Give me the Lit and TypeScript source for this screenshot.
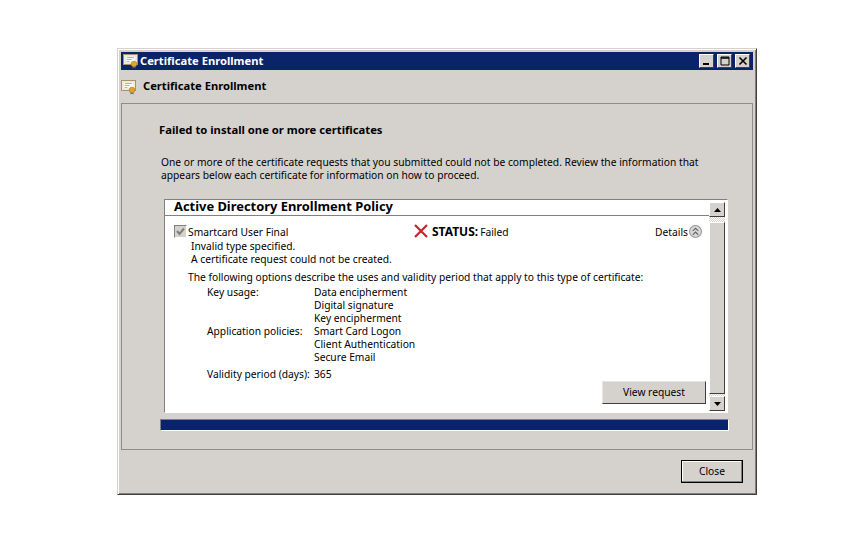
import { LitElement, html, css, svg } from 'lit';
import { customElement } from 'lit/decorators.js';

const certIcon = html`<svg width="16" height="16" viewBox="0 0 16 16">
  <rect x="0.5" y="1.5" width="14" height="10" fill="#f6f3e8" stroke="#a8926a"/>
  <rect x="2" y="3" width="11" height="7" fill="#fbfaf4" stroke="#d9cfb4" stroke-width="0.6"/>
  <path d="M4 4.5h7M3.5 6.5h5M3.5 8.5h3" stroke="#a9b6cc" stroke-width="1"/>
  <path d="M9.5 12v3.5l1.5-1 1.5 1V12" fill="#3a62c0"/>
  <circle cx="11" cy="11" r="2.8" fill="#e3a526" stroke="#b07810" stroke-width="0.6"/>
</svg>`;

const details = [
  ['Key usage:', ['Data encipherment', 'Digital signature', 'Key encipherment']],
  ['Application policies:', ['Smart Card Logon', 'Client Authentication', 'Secure Email']],
  ['Validity period (days):', ['365']],
] as const;

const chevronUp = svg`<path d="M3.5 5.5L6 3l2.5 2.5M3.5 9L6 6.5 8.5 9" fill="none" stroke="#666" stroke-width="1"/>`;

@customElement('app-root')
export class AppRoot extends LitElement {
  static styles = css`
    :host {
      display: block;
      width: 841px;
      height: 550px;
      box-sizing: border-box;
      padding: 48px 84px 55px 117px;
      background: #fff;
      font-family: 'Noto Sans', sans-serif;
      font-size: 10.26px;
      color: #000;
    }
    .window {
      width: 640px;
      height: 447px;
      box-sizing: border-box;
      background: #d5d2cd;
      border: 1px solid;
      border-color: #d5d2cd #404040 #404040 #d5d2cd;
      box-shadow: inset 1px 1px 0 #fff, inset -1px -1px 0 #808080;
      padding: 3px;
      display: flex;
      flex-direction: column;
    }
    .titlebar {
      height: 18px;
      flex: none;
      background: #0a246a;
      color: #fff;
      display: flex;
      align-items: center;
      padding: 0 3px 0 2px;
      font-weight: bold;
      font-size: 11.2px;
      gap: 1px;
    }
    .titlebar .name { flex: 1; padding-bottom: 2px; }
    .winbtn {
      width: 15px;
      height: 14px;
      box-sizing: border-box;
      background: #d5d2cd;
      border: 1px solid;
      border-color: #fff #404040 #404040 #fff;
      display: flex;
      align-items: center;
      justify-content: center;
    }
    .winbtn + .winbtn { margin-left: 2px; }
    .heading {
      height: 33px;
      flex: none;
      display: flex;
      align-items: center;
      gap: 6px;
      font-weight: bold;
      font-size: 11.2px;
    }
    .heading span { padding-bottom: 2px; }
    .panel {
      height: 347px;
      flex: none;
      box-sizing: border-box;
      border: 1px solid #8f8d88;
      padding: 19px 22px 0 37px;
      display: flex;
      flex-direction: column;
    }
    .failed { font-weight: bold; font-size: 11.25px; line-height: 14px; }
    .intro { margin: 19px 0 0 2px; line-height: 13px; width: 560px; }
    .list {
      margin: 17px 0 0 5px;
      height: 214px;
      flex: none;
      box-sizing: border-box;
      width: 564px;
      display: flex;
      background: #fff;
      border-top: 1px solid #808080;
      border-left: 1px solid #808080;
      border-right: 1px solid #fff;
      border-bottom: 1px solid #fff;
    }
    .list-body { flex: 1; min-width: 0; display: flex; flex-direction: column; }
    .policy {
      height: 16px;
      flex: none;
      box-sizing: border-box;
      padding-left: 9px;
      border-bottom: 1px solid #808080;
      font-weight: bold;
      font-size: 12.9px;
      line-height: 13px;
    }
    .entry { padding: 7px 3px 0 9px; display: flex; flex-direction: column; flex: 1; }
    .row { display: flex; align-items: center; height: 17px; padding-right: 4px; }
    .check {
      width: 13px;
      height: 13px;
      box-sizing: border-box;
      border: 1px solid;
      border-color: #808080 #fff #fff #808080;
      background: #d5d2cd;
      margin-right: 1px;
    }
    .cert-name { width: 226px; }
    .status { flex: 1; display: flex; align-items: center; gap: 4px; }
    .status svg { margin-top: -1px; }
    .status b { font-size: 12px; margin-right: -2px; }
    .more { display: flex; align-items: center; gap: 1px; }
    .errors { padding-left: 17px; line-height: 13px; }
    .lead { padding-left: 14px; margin-top: 5px; line-height: 13px; }
    .props {
      margin: 2px 0 0 33px;
      display: grid;
      grid-template-columns: 107px 1fr;
      line-height: 13px;
      white-space: nowrap;
    }
    .props .v { display: flex; flex-direction: column; }
    .props .last { margin-top: 4px; }
    .actions { margin-top: auto; display: flex; justify-content: flex-end; padding: 0 0 9px; }
    button {
      font: inherit;
      color: #000;
      background: #d5d2cd;
      box-sizing: border-box;
      padding: 0 0 2px;
    }
    .view {
      width: 104px;
      height: 23px;
      border: 1px solid;
      border-color: #e8e6e0 #404040 #404040 #e8e6e0;
    }
    .scroll {
      width: 16px;
      flex: none;
      display: flex;
      flex-direction: column;
      box-sizing: border-box;
      background: #d5d2cd;
      margin: 2px 2px 1px 0;
    }
    .sbtn {
      height: 15px;
      flex: none;
      box-sizing: border-box;
      background: #d5d2cd;
      border: 1px solid;
      border-color: #fff #404040 #404040 #fff;
      display: flex;
      align-items: center;
      justify-content: center;
    }
    .track {
      height: 5px;
      flex: none;
      background: repeating-conic-gradient(#d5d2cd 0 25%, #fff 0 50%) 0 0 / 2px 2px;
    }
    .track.thin { height: 2px; }
    .thumb {
      flex: 1;
      box-sizing: border-box;
      background: #d5d2cd;
      border: 1px solid;
      border-color: #fff #404040 #404040 #fff;
    }
    .progress {
      margin: 6px 0 0 1px;
      width: 569px;
      height: 12px;
      flex: none;
      box-sizing: border-box;
      background: #0a246a;
      border: 1px solid;
      border-color: #808080 #fff #fff #808080;
    }
    .footer {
      flex: 1;
      display: flex;
      justify-content: flex-end;
      align-items: flex-start;
      padding: 10px 10px 0 0;
    }
    .close {
      width: 62px;
      height: 23px;
      border: 1px solid #000;
      box-shadow: inset -1px -1px 0 #808080, inset 1px 1px 0 #fff;
    }
  `;

  render() {
    return html`
      <div class="window">
        <div class="titlebar">
          ${certIcon}
          <span class="name">Certificate Enrollment</span>
          <span class="winbtn"><svg width="10" height="10"><rect x="1" y="7" width="6" height="2" fill="#000"/></svg></span>
          <span class="winbtn"><svg width="10" height="10"><path d="M1 2h8v7H1z M1 1h8v1H1z" fill="none" stroke="#000"/></svg></span>
          <span class="winbtn"><svg width="10" height="10"><path d="M1.5 1.5l7 7M8.5 1.5l-7 7" stroke="#000" stroke-width="1.6"/></svg></span>
        </div>
        <div class="heading">${certIcon}<span>Certificate Enrollment</span></div>
        <div class="panel">
          <div class="failed">Failed to install one or more certificates</div>
          <div class="intro">One or more of the certificate requests that you submitted could not be completed. Review the information that appears below each certificate for information on how to proceed.</div>
          <div class="list">
            <div class="list-body">
              <div class="policy">Active Directory Enrollment Policy</div>
              <div class="entry">
                <div class="row">
                  <span class="check"><svg width="11" height="11" viewBox="0 0 11 11"><path d="M2 5l2.5 3L9 2.5" fill="none" stroke="#808080" stroke-width="2"/></svg></span>
                  <span class="cert-name">Smartcard User Final</span>
                  <span class="status">
                    <svg width="14" height="14" viewBox="0 0 14 14"><path d="M1 1l12 12M13 1L1 13" stroke="#c8232a" stroke-width="2.2"/></svg>
                    <b>STATUS:</b><span>Failed</span>
                  </span>
                  <span class="more">Details
                    <svg width="13" height="13" viewBox="0 0 12 12"><circle cx="6" cy="6" r="5.5" fill="#d8d8d8" stroke="#999"/>${chevronUp}</svg>
                  </span>
                </div>
                <div class="errors">Invalid type specified.<br />A certificate request could not be created.</div>
                <div class="lead">The following options describe the uses and validity period that apply to this type of certificate:</div>
                <div class="props">
                  ${details.map(
                    ([k, v], i) => html`<div class=${i === 2 ? 'last' : ''}>${k}</div><div class="v ${i === 2 ? 'last' : ''}">${v.map((t) => html`<span>${t}</span>`)}</div>`,
                  )}
                </div>
                <div class="actions"><button class="view">View request</button></div>
              </div>
            </div>
            <div class="scroll">
              <div class="sbtn"><svg width="9" height="6"><path d="M4.5 1L8 5H1z" fill="#000"/></svg></div>
              <div class="track"></div>
              <div class="thumb"></div>
              <div class="track thin"></div>
              <div class="sbtn"><svg width="9" height="6"><path d="M4.5 5L8 1H1z" fill="#000"/></svg></div>
            </div>
          </div>
          <div class="progress"></div>
        </div>
        <div class="footer"><button class="close">Close</button></div>
      </div>
    `;
  }
}
